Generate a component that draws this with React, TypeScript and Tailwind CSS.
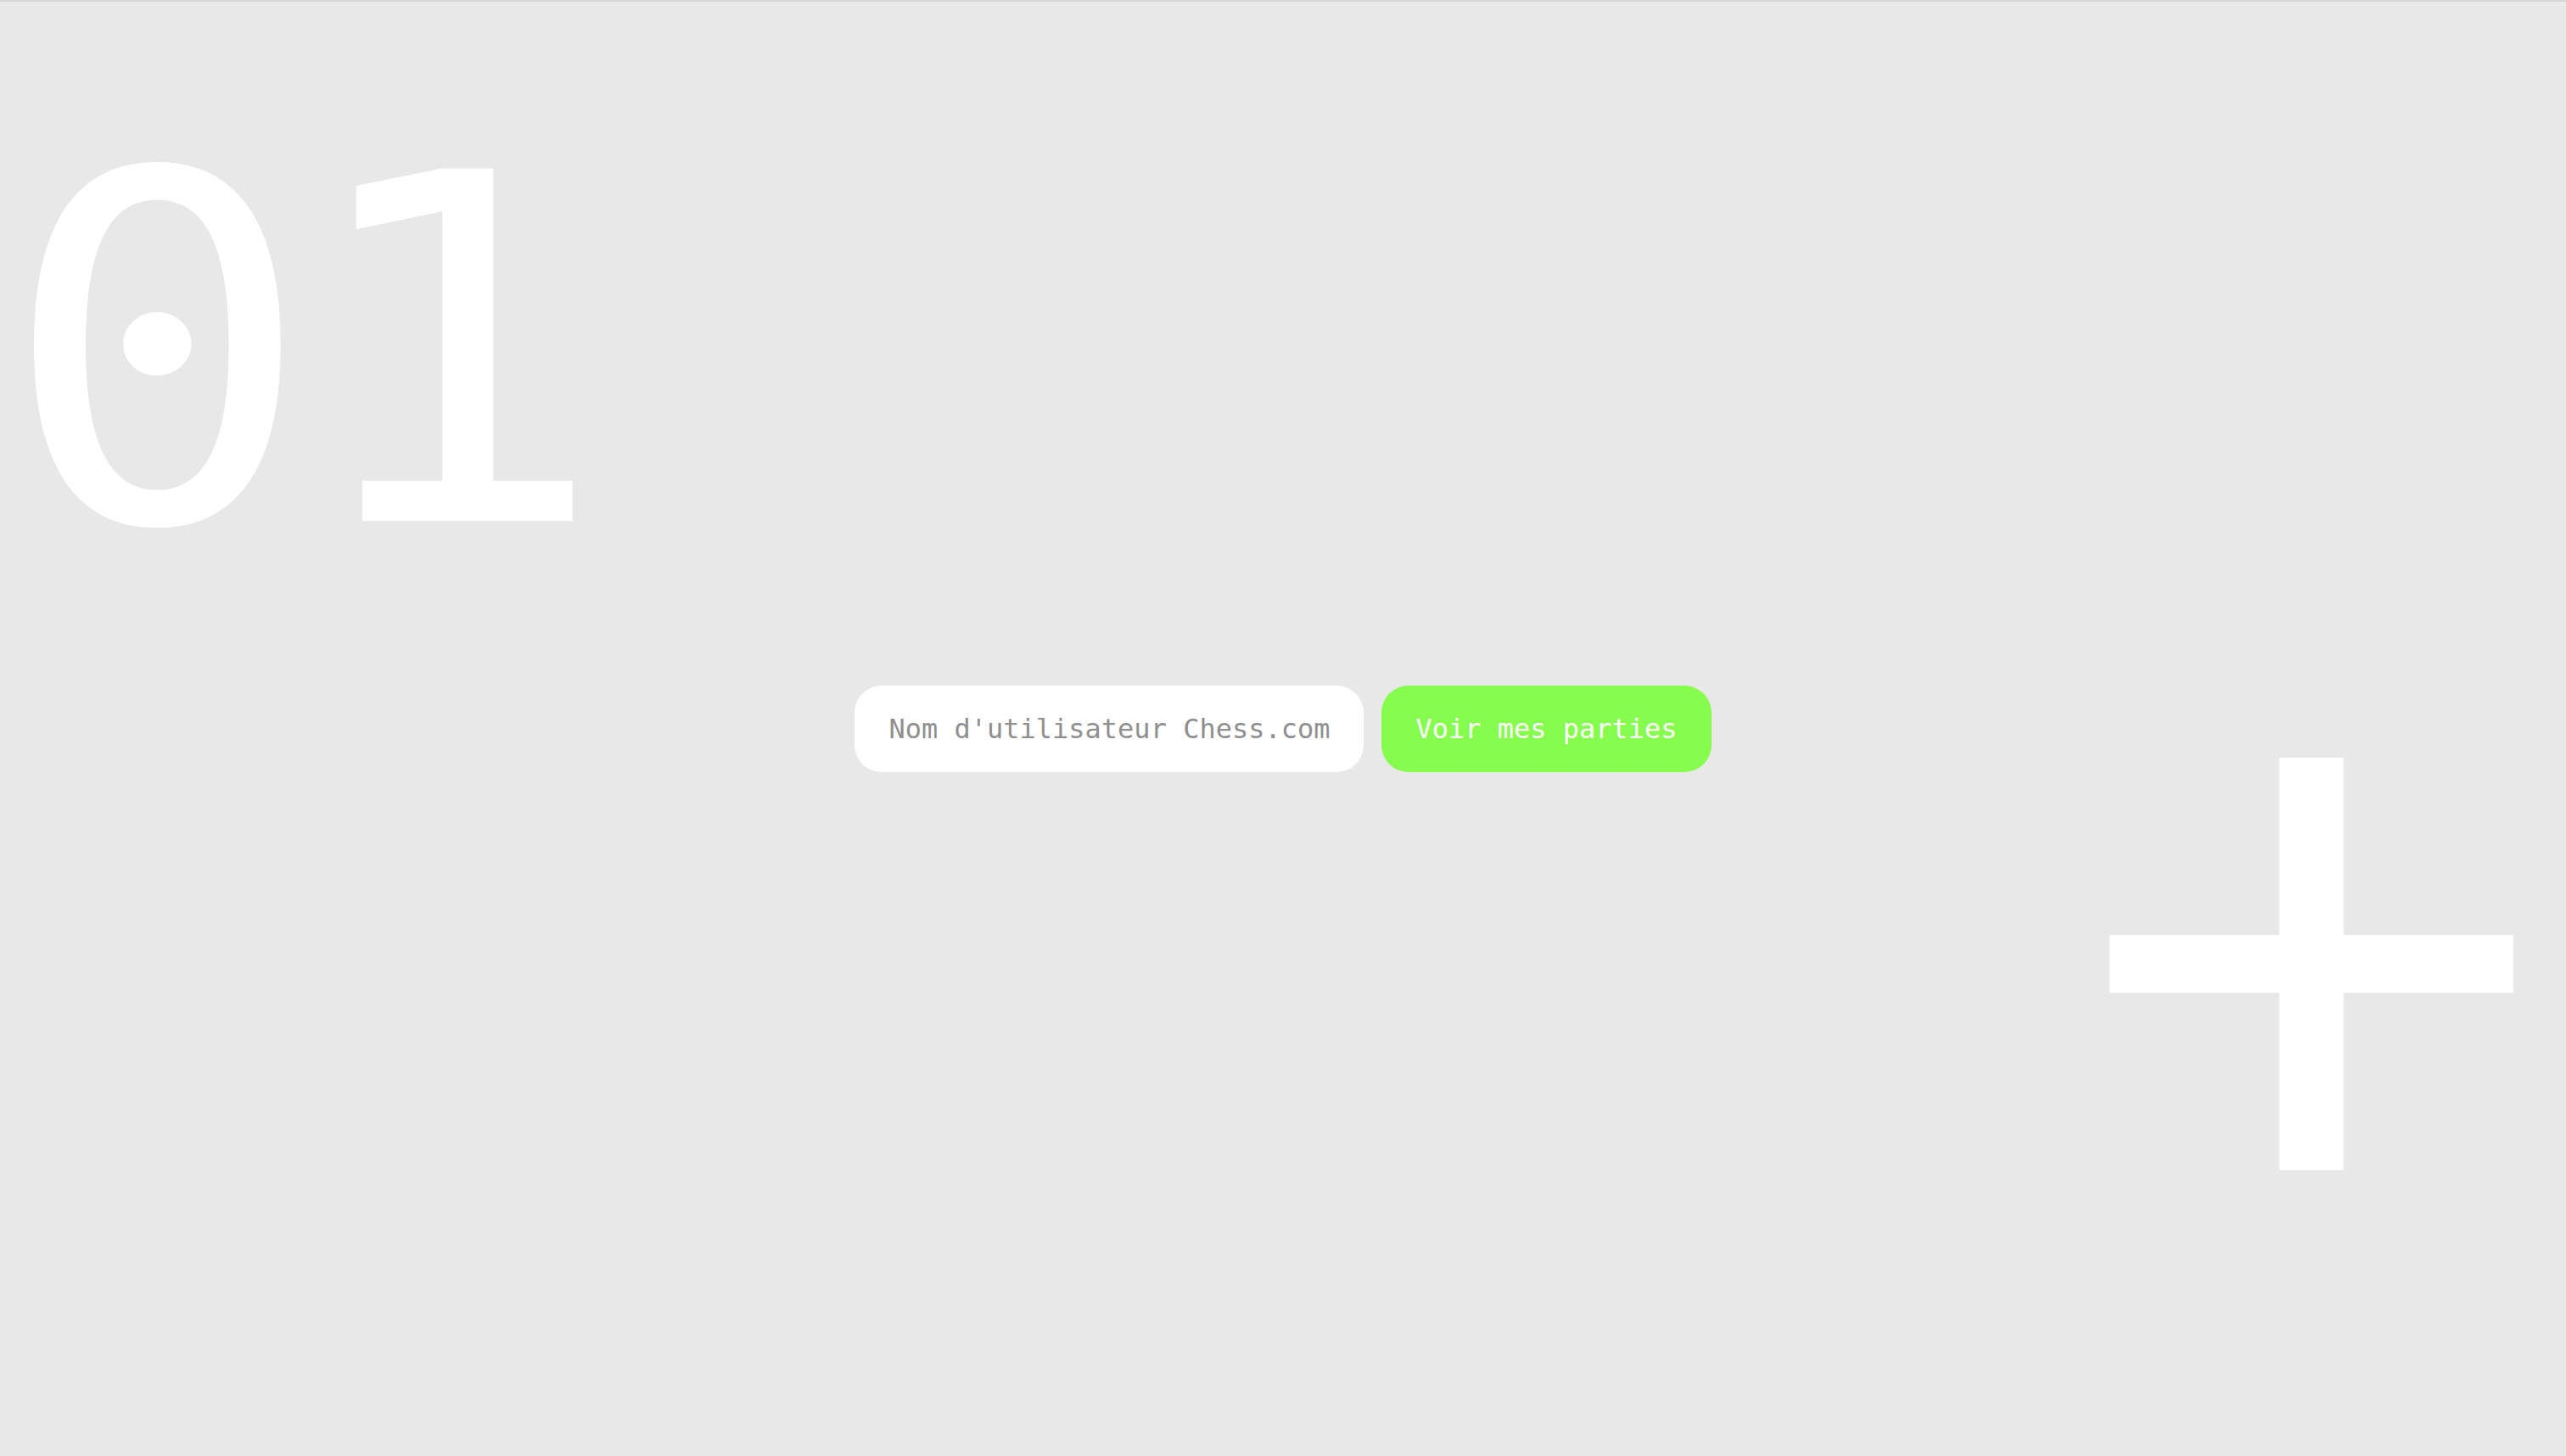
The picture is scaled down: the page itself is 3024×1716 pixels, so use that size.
import React from "react";

export default function App() {
  return (
    <div className="relative h-screen w-full overflow-hidden border-t-2 border-[#d8d8d8] bg-[#e8e8e8] font-['DejaVu_Sans_Mono',monospace]">
      <div className="absolute left-0 top-[130px] origin-top-left scale-x-[1.08] select-none text-[570px] leading-none tracking-[-23px] text-white">
        01
      </div>

      <svg
        className="absolute right-[62px] top-[891px]"
        width="476"
        height="486"
        viewBox="0 0 476 486"
        aria-label="+"
      >
        <rect x="200" y="0" width="76" height="486" fill="#ffffff" />
        <rect x="0" y="209" width="476" height="68" fill="#ffffff" />
      </svg>

      <div className="relative flex h-full items-center justify-center gap-[21px]">
        <input
          type="text"
          placeholder="Nom d'utilisateur Chess.com"
          className="h-[102px] w-[600px] rounded-[32px] bg-white px-10 text-[32px] text-[#333] outline-none placeholder:text-[#8f8f8f]"
        />
        <button className="h-[102px] rounded-[32px] bg-[#86fc4e] px-10 text-[32px] text-white">
          Voir mes parties
        </button>
      </div>
    </div>
  );
}
